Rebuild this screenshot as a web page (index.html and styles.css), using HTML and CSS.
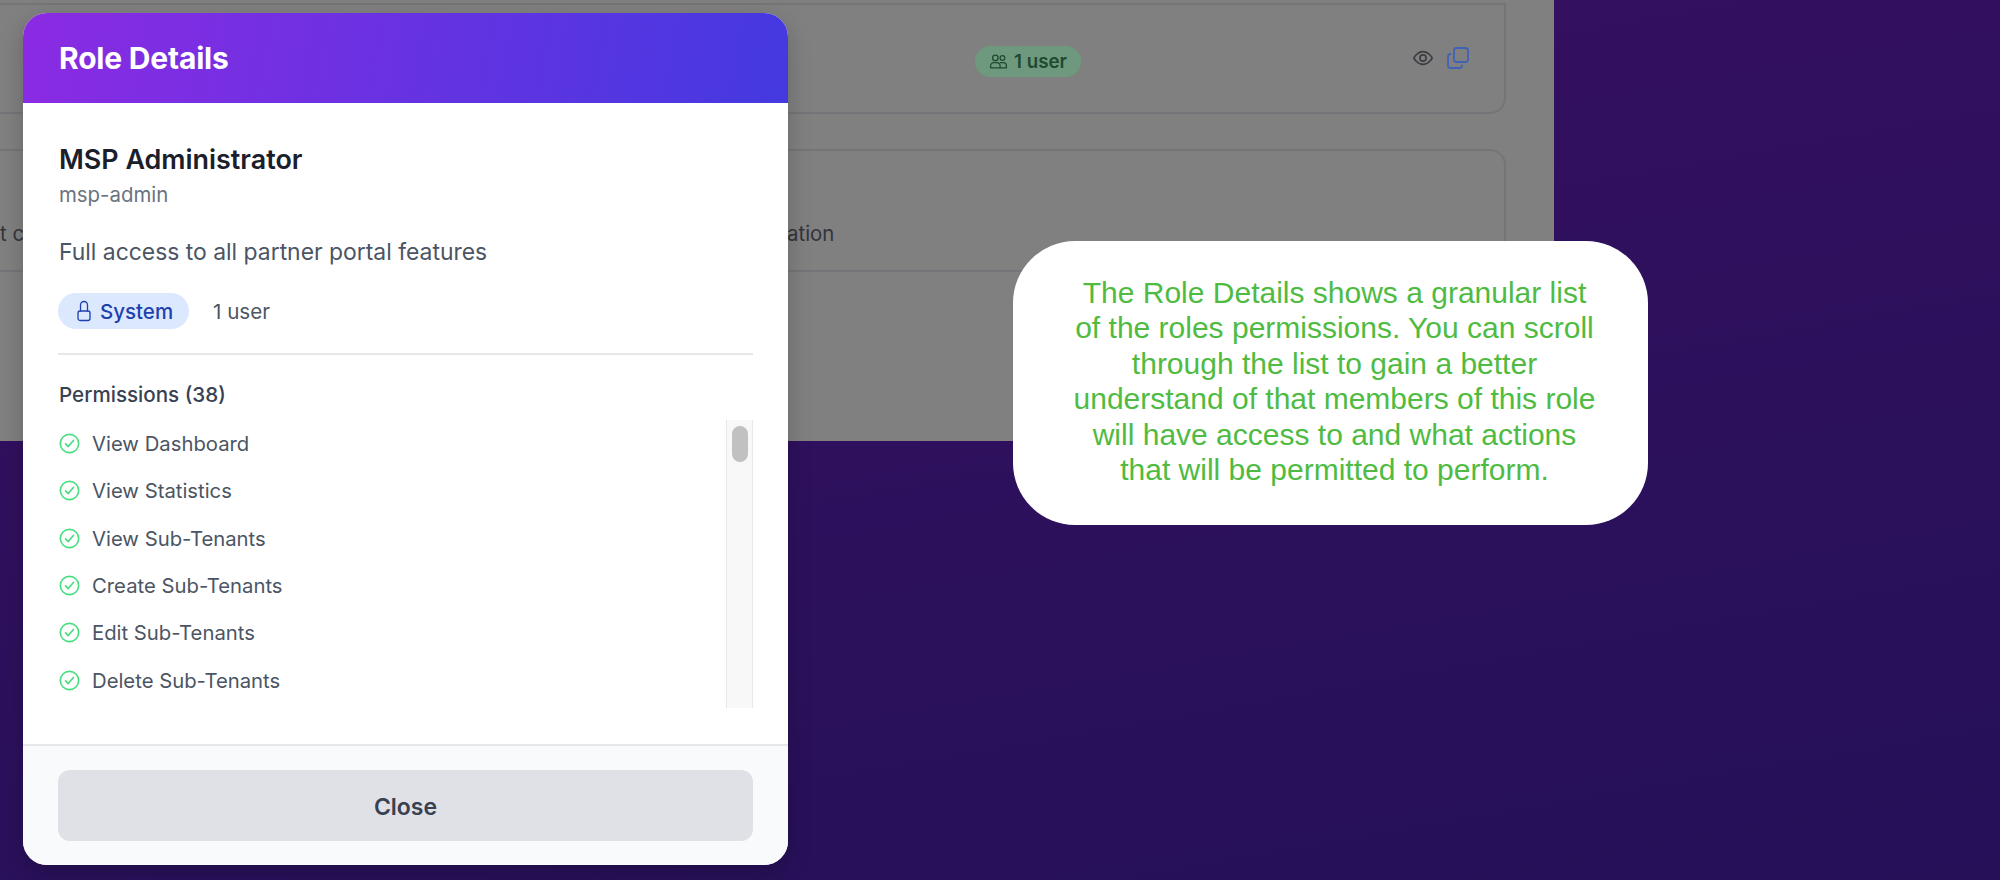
FILE: index.html
```html
<!DOCTYPE html>
<html lang="en">
<head>
<meta charset="utf-8">
<title>Role Details</title>
<link rel="stylesheet" href="styles.css">
</head>
<body>
<main class="stage">
  <section class="panel">
    <div class="card card-top">
      <span class="badge">
        <svg class="badge-icon" viewBox="0 0 24 24" fill="none" stroke="currentColor" stroke-width="1.6" stroke-linecap="round" stroke-linejoin="round"><circle cx="8" cy="7.5" r="3.5"/><circle cx="17" cy="7.5" r="3"/><path d="M2 20v-2.5a4 4 0 0 1 4-4h4a4 4 0 0 1 4 4V20z"/><path d="M14.5 13.5H18a4 4 0 0 1 4 4V20h-8"/></svg>
        1 user
      </span>
      <span class="actions">
        <svg class="eye" viewBox="0 0 24 24" fill="none" stroke="currentColor" stroke-width="1.8" stroke-linecap="round" stroke-linejoin="round"><path d="M2 12s3.6-7 10-7 10 7 10 7-3.6 7-10 7-10-7-10-7z"/><circle cx="12" cy="12" r="3.4"/></svg>
        <svg class="copy" viewBox="0 0 24 24" fill="none" stroke="currentColor" stroke-width="1.8" stroke-linecap="round" stroke-linejoin="round"><rect x="8" y="2" width="14" height="14" rx="2.5"/><path d="M16 19.5a2.5 2.5 0 0 1-2.5 2.5h-9A2.5 2.5 0 0 1 2 19.5v-9A2.5 2.5 0 0 1 4.500 8"/></svg>
      </span>
    </div>
    <div class="card card-second">
      <span class="cut cut-left">t c</span>
      <span class="cut cut-right">ation</span>
    </div>
  </section>

  <section class="modal">
    <header class="modal-head"><h2>Role Details</h2></header>
    <div class="modal-body">
      <h3 class="role-name">MSP Administrator</h3>
      <p class="role-slug">msp-admin</p>
      <p class="role-desc">Full access to all partner portal features</p>
      <div class="role-meta">
        <span class="pill">
          <svg class="lock" viewBox="0 0 16 22" fill="none" stroke="currentColor" stroke-width="1.3" stroke-linecap="round" stroke-linejoin="round"><path d="M4.500 11V5a3.500 3.500 0 0 1 7 0v6"/><rect x="2" y="11" width="12" height="9.500" rx="2"/></svg>
          System
        </span>
        <span class="count">1 user</span>
      </div>
      <h4 class="perm-title">Permissions (38)</h4>
      <div class="perm-wrap">
        <ul class="perm-list">
          <li><svg class="check" viewBox="0 0 24 24" fill="none" stroke="currentColor" stroke-width="1.9" stroke-linecap="round" stroke-linejoin="round"><circle cx="12" cy="12" r="10.500"/><path d="M7.500 12.500l3 3 6-7"/></svg>View Dashboard</li>
          <li><svg class="check" viewBox="0 0 24 24" fill="none" stroke="currentColor" stroke-width="1.9" stroke-linecap="round" stroke-linejoin="round"><circle cx="12" cy="12" r="10.500"/><path d="M7.500 12.500l3 3 6-7"/></svg>View Statistics</li>
          <li><svg class="check" viewBox="0 0 24 24" fill="none" stroke="currentColor" stroke-width="1.9" stroke-linecap="round" stroke-linejoin="round"><circle cx="12" cy="12" r="10.500"/><path d="M7.500 12.500l3 3 6-7"/></svg>View Sub-Tenants</li>
          <li><svg class="check" viewBox="0 0 24 24" fill="none" stroke="currentColor" stroke-width="1.9" stroke-linecap="round" stroke-linejoin="round"><circle cx="12" cy="12" r="10.500"/><path d="M7.500 12.500l3 3 6-7"/></svg>Create Sub-Tenants</li>
          <li><svg class="check" viewBox="0 0 24 24" fill="none" stroke="currentColor" stroke-width="1.9" stroke-linecap="round" stroke-linejoin="round"><circle cx="12" cy="12" r="10.500"/><path d="M7.500 12.500l3 3 6-7"/></svg>Edit Sub-Tenants</li>
          <li><svg class="check" viewBox="0 0 24 24" fill="none" stroke="currentColor" stroke-width="1.9" stroke-linecap="round" stroke-linejoin="round"><circle cx="12" cy="12" r="10.500"/><path d="M7.500 12.500l3 3 6-7"/></svg>Delete Sub-Tenants</li>
        </ul>
        <div class="track"><div class="thumb"></div></div>
      </div>
    </div>
    <footer class="modal-foot"><button class="close" type="button">Close</button></footer>
  </section>

  <aside class="callout">The Role Details shows a granular list of the roles permissions. You can scroll through the list to gain a better understand of that members of this role will have access to and what actions that will be permitted to perform.</aside>
</main>
</body>
</html>
```
FILE: styles.css
```css
* { box-sizing: border-box; }
html, body { margin: 0; height: 100%; }
body {
  font-family: Inter, "Liberation Sans", sans-serif;
  background: linear-gradient(170deg, #3a1062 0%, #32105f 30%, #241158 100%);
  overflow: hidden;
}
.stage { position: relative; width: 2000px; height: 880px; overflow: hidden; }

.panel { width: 1554px; height: 441px; background: #808080; overflow: hidden; }
.card {
  margin: 0 48px 0 -20px;
  border: 2px solid #747578;
  display: flex;
}
.card-top {
  margin-top: 3px;
  height: 111px;
  border-radius: 0 0 16px 0;
  align-items: center;
  justify-content: flex-end;
  padding-right: 34px;
}
.badge {
  display: inline-flex;
  align-items: center;
  gap: 6px;
  height: 31px;
  width: 106px;
  margin: 6px 331px 0 0;
  padding-left: 14px;
  border-radius: 16px;
  background: #6e997e;
  color: #1f4a30;
  font-size: 18.800px;
  font-weight: 600;
  white-space: nowrap;
}
.badge-icon { width: 19px; height: 19px; flex: none; }
.actions { display: flex; align-items: center; gap: 12px; margin-top: -1px; }
.eye { width: 22px; height: 22px; color: #3b3d42; }
.copy { width: 24px; height: 24px; color: #4062b4; }
.card-second {
  margin-top: 35px;
  height: 123px;
  border-radius: 16px 16px 0 0;
  padding-top: 69px;
  font-size: 20.400px;
  line-height: 28px;
  color: #33353a;
}
.cut-left { margin-left: 18px; }
.cut-right { margin-left: 763px; }

.modal {
  position: absolute;
  left: 23px;
  top: 13px;
  width: 765px;
  height: 852px;
  display: flex;
  flex-direction: column;
  border-radius: 24px;
  background: #fff;
  overflow: hidden;
  box-shadow: 0 8px 24px rgba(0, 0, 0, .2);
}
.modal-head {
  height: 90px;
  flex: none;
  padding: 0 36px;
  display: flex;
  align-items: center;
  background: linear-gradient(100deg, #8b2be3 0%, #4439e0 100%);
}
.modal-head h2 { margin: 0; color: #fff; font-size: 30px; font-weight: 700; letter-spacing: -.2px; }
.modal-body { flex: 1; padding: 41px 35px 0; }
.role-name { margin: 0 1px; font-size: 26.900px; line-height: 30px; font-weight: 600; color: #1a202b; }
.role-slug { margin: 9px 1px 0; font-size: 20.400px; line-height: 24px; color: #6b7280; }
.role-desc { margin: 31px 1px 0; font-size: 22.900px; line-height: 28px; color: #4b5563; }
.role-meta {
  margin-top: 27px;
  padding-bottom: 24px;
  border-bottom: 2px solid #e5e7eb;
  display: flex;
  align-items: center;
  gap: 24px;
}
.pill {
  display: inline-flex;
  align-items: center;
  gap: 8px;
  width: 131px;
  height: 36px;
  padding-left: 18px;
  border-radius: 18px;
  background: #dbe8fe;
  color: #1e40af;
  font-size: 20.500px;
  font-weight: 500;
}
.lock { width: 16px; height: 22px; flex: none; }
.count { font-size: 20.600px; color: #4b5563; }
.perm-title { margin: 28px 1px 13px; font-size: 20.600px; line-height: 24px; font-weight: 500; color: #374151; }
.perm-wrap { display: flex; height: 288px; }
.perm-list { flex: 1; margin: 0; padding: 0; list-style: none; }
.perm-list li {
  height: 47.300px;
  display: flex;
  align-items: center;
  gap: 12px;
  padding-left: 1px;
  font-size: 20.300px;
  color: #4b5563;
}
.check { width: 21px; height: 21px; color: #4ade80; flex: none; }
.track {
  width: 27px;
  background: #f8f8f8;
  border-left: 1.500px solid #e8e8e8;
  border-right: 1.500px solid #e8e8e8;
  padding: 6px 4px 0 5px;
}
.thumb { height: 36px; border-radius: 8px; background: #c1c1c1; }
.modal-foot {
  height: 121px;
  flex: none;
  padding: 24px 35px 23px;
  border-top: 2px solid #e5e7eb;
  background: #f9fafb;
}
.close {
  display: block;
  width: 100%;
  height: 71px;
  border: 0;
  padding: 3px 0 0;
  border-radius: 12px;
  background: #e0e1e6;
  color: #374151;
  font-family: inherit;
  font-size: 23px;
  font-weight: 600;
}

.callout {
  position: absolute;
  left: 1013px;
  top: 241px;
  width: 635px;
  height: 284px;
  padding: 34px 51px 0 59px;
  border-radius: 62px;
  background: #fff;
  color: #4fbb42;
  font-family: "Liberation Sans", Arial, sans-serif;
  font-size: 30px;
  line-height: 35.400px;
  text-align: center;
}
```
